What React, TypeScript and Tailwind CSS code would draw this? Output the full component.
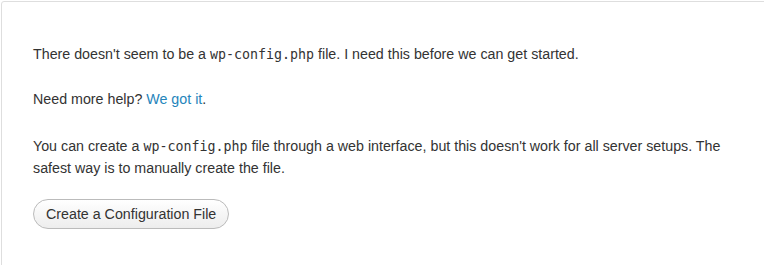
export default function App() {
  const code = 'font-["DejaVu_Sans_Mono","Liberation_Mono",monospace] text-[13.3px] leading-none'
  return (
    <div className="h-[265px] w-[764px] overflow-hidden bg-white font-['Liberation_Sans',Arial,sans-serif] text-[14.25px] leading-[22px] text-[#333]">
      <div className="ml-px mt-px h-[400px] w-[900px] rounded-[3px] border border-[#dedede] px-[31px] pt-[17px]">
        <p className="mt-[24px]">
          There doesn't seem to be a <code className={code}>wp-config.php</code> file. I need this before we can get started.
        </p>
        <p className="mt-[23px]">
          Need more help? <a href="#" className="text-[#2585bb]">We got it</a>.
        </p>
        <p className="mt-[25px] w-[700px]">
          You can create a <code className={code}>wp-config.php</code> file through a web interface, but this doesn't work for all server setups. The safest way is to manually create the file.
        </p>
        <div className="mt-[20px]">
          <button className="h-[30px] rounded-[15px] border border-[#bbb] bg-gradient-to-b from-white to-[#ededed] px-[12px] text-[14.25px] text-[#333]">
            Create a Configuration File
          </button>
        </div>
      </div>
    </div>
  )
}
